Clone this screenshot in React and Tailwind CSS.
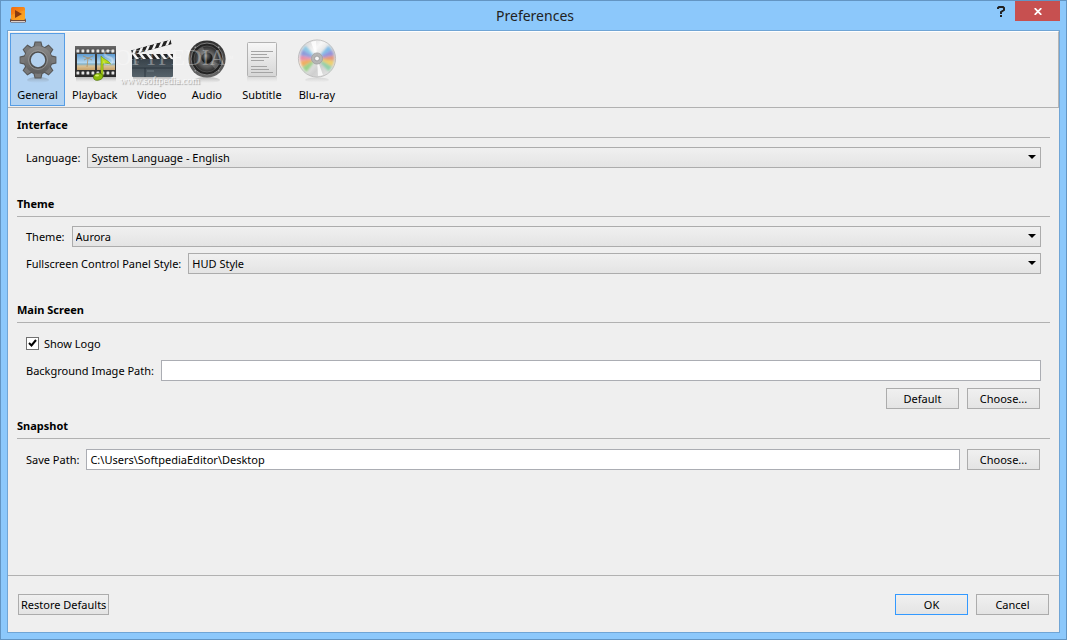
import { useState } from "react";

const wedges = [
  { from: 150, to: 172, color: "#f0a24a" },
  { from: 172, to: 190, color: "#e87f9a" },
  { from: 190, to: 212, color: "#7f8fd8" },
  { from: 212, to: 228, color: "#7cc3e6" },
  { from: 128, to: 150, color: "#8fcf7a" },
  { from: 312, to: 330, color: "#6fb6ea" },
  { from: 330, to: 350, color: "#8a86dc" },
  { from: 350, to: 368, color: "#ea8f6c" },
  { from: 8, to: 28, color: "#f2cf5c" },
  { from: 28, to: 48, color: "#86d0a0" }
];

const point = (angle, r) => {
  const rad = (angle * Math.PI) / 180;
  return `${22 + r * Math.cos(rad)},${20.5 + r * Math.sin(rad)}`;
};

function GearIcon() {
  return (
    <svg width="44" height="48" viewBox="0 0 44 48" aria-hidden="true">
      <defs>
        <linearGradient id="gear" x1="0" y1="0" x2="0" y2="1">
          <stop offset="0" stopColor="#8b8b8b" />
          <stop offset="1" stopColor="#5d5d5d" />
        </linearGradient>
        <linearGradient id="fade" x1="0" y1="0" x2="0" y2="1">
          <stop offset="0" stopColor="#555" stopOpacity="0.35" />
          <stop offset="1" stopColor="#777" stopOpacity="0" />
        </linearGradient>
      </defs>
      <ellipse cx="22" cy="42" rx="11" ry="3" fill="url(#fade)" />
      <g fill="#555">
        {[0, 45, 90, 135, 180, 225, 270, 315].map(a => (
          <path key={a} d="M17 10 L18.6 3.6 H25.4 L27 10Z" transform={`rotate(${a} 22 22)`} />
        ))}
        <circle cx="22" cy="22" r="14.5" />
      </g>
      <g fill="url(#gear)">
        {[0, 45, 90, 135, 180, 225, 270, 315].map(a => (
          <path key={a} d="M18 11 L19.4 4.4 H24.6 L26 11Z" fill="#787878" transform={`rotate(${a} 22 22)`} />
        ))}
        <circle cx="22" cy="22" r="13.7" />
      </g>
      <circle cx="22" cy="22" r="8" fill="#b3d1ef" stroke="#505050" strokeWidth="1.6" />
      <circle cx="22" cy="22" r="9.4" fill="none" stroke="#a0a0a0" strokeWidth="0.7" />
    </svg>
  );
}

function FilmIcon() {
  return (
    <svg width="44" height="48" viewBox="0 0 44 48" aria-hidden="true">
      <defs>
        <linearGradient id="film" x1="0" y1="0" x2="0" y2="1">
          <stop offset="0" stopColor="#6a6a6a" />
          <stop offset="0.3" stopColor="#383838" />
          <stop offset="1" stopColor="#2a2a2a" />
        </linearGradient>
        <linearGradient id="sky" x1="0" y1="0" x2="0" y2="1">
          <stop offset="0" stopColor="#5c9ad0" />
          <stop offset="0.55" stopColor="#b5d8f0" />
          <stop offset="0.62" stopColor="#7fb0c8" />
          <stop offset="0.75" stopColor="#d9c296" />
          <stop offset="1" stopColor="#c8a26a" />
        </linearGradient>
      </defs>
      <rect x="3" y="39" width="40" height="5" fill="url(#fade)" />
      <rect x="2" y="8" width="41" height="31" fill="url(#film)" />
      {[3, 8, 13, 18, 23, 28, 33, 38].map(x => (
        <g key={x} fill="#e4e4e4">
          <rect x={x + 0.5} y="11.5" width="2.8" height="3" rx="0.5" />
          <rect x={x + 0.5} y="33.5" width="2.8" height="3" rx="0.5" />
        </g>
      ))}
      <rect x="4" y="16" width="18" height="16" fill="url(#sky)" />
      <rect x="24" y="16" width="18" height="16" fill="url(#sky)" />
      <path d="M14 29 L15 20 M15 20 L10 18 M15 20 L20 18 M15 20 L11 22 M15 20 L19 22" stroke="#b08a58" strokeWidth="0.9" fill="none" opacity="0.8" />
      <path d="M28 38.5 V18 C30 21 35 22 38 26 C34 25 32 25 30 26 V38.5Z" fill="#b8dc1c" stroke="#74970e" strokeWidth="0.7" />
      <ellipse cx="25.2" cy="38.8" rx="4.7" ry="3.4" fill="#8cbc0a" stroke="#527708" strokeWidth="0.7" transform="rotate(-15 25 39)" />
      <ellipse cx="24" cy="37.6" rx="2" ry="1" fill="#daf06c" />
    </svg>
  );
}

function ClapperIcon() {
  return (
    <svg width="44" height="48" viewBox="0 0 44 48" aria-hidden="true">
      <defs>
        <linearGradient id="slate" x1="0" y1="0" x2="0" y2="1">
          <stop offset="0" stopColor="#38424a" />
          <stop offset="1" stopColor="#56626a" />
        </linearGradient>
        <clipPath id="bar">
          <rect x="2" y="16" width="41" height="5" />
        </clipPath>
      </defs>
      <rect x="3" y="39" width="39" height="5" fill="url(#fade)" />
      <g clipPath="url(#bar)" transform="rotate(-15 2 16) translate(0 -4)">
        <rect x="2" y="16" width="41" height="5" fill="#222" />
        {[1, 8, 15, 22, 29, 36].map(x => (
          <path key={x} d={`M${x} 21 L${x + 4} 16 H${x + 7} L${x + 3} 21Z`} fill="#f3f3f3" />
        ))}
      </g>
      <g clipPath="url(#bar)">
        <rect x="2" y="16" width="41" height="5" fill="#222" />
        {[2, 9, 16, 23, 30, 37].map(x => (
          <path key={x} d={`M${x} 16 H${x + 3} L${x + 7} 21 H${x + 4}Z`} fill="#f3f3f3" />
        ))}
      </g>
      <rect x="2" y="21" width="41" height="18" rx="1" fill="url(#slate)" />
      <path d="M2 30 H43 M15 30 V39" stroke="#27303a" strokeWidth="0.8" />
      <path d="M5 24 H9 M5 26 H8 M17 33 H24" stroke="#82909a" strokeWidth="0.7" />
    </svg>
  );
}

function SpeakerIcon() {
  return (
    <svg width="44" height="48" viewBox="0 0 44 48" aria-hidden="true">
      <defs>
        <linearGradient id="rim" x1="0" y1="0" x2="0" y2="1">
          <stop offset="0" stopColor="#303030" />
          <stop offset="1" stopColor="#686868" />
        </linearGradient>
        <radialGradient id="cone">
          <stop offset="0" stopColor="#333" />
          <stop offset="0.55" stopColor="#666" />
          <stop offset="1" stopColor="#292929" />
        </radialGradient>
        <radialGradient id="cap" cx="0.4" cy="0.3">
          <stop offset="0" stopColor="#777" />
          <stop offset="1" stopColor="#1b1b1b" />
        </radialGradient>
      </defs>
      <ellipse cx="22" cy="42" rx="13" ry="3" fill="url(#fade)" />
      <circle cx="22" cy="21" r="18.6" fill="url(#rim)" />
      <circle cx="22" cy="21" r="16" fill="#222" stroke="#7c7c7c" strokeWidth="1" />
      <circle cx="22" cy="21" r="13" fill="url(#cone)" stroke="#555" strokeWidth="0.8" />
      <path d="M22 21 L12 13 A13 13 0 0 1 18 9Z M22 21 L34 26 A13 13 0 0 1 30 31Z" fill="#aaa" opacity="0.35" />
      <circle cx="22" cy="20" r="5.5" fill="url(#cap)" />
      {[45, 135, 225, 315].map(a => (
        <circle key={a} cx="22" cy="4.4" r="0.8" fill="#aaa" transform={`rotate(${a} 22 21)`} />
      ))}
    </svg>
  );
}

function PageIcon() {
  return (
    <svg width="44" height="48" viewBox="0 0 44 48" aria-hidden="true">
      <defs>
        <linearGradient id="page" x1="0" y1="0" x2="0" y2="1">
          <stop offset="0" stopColor="#f7f7f7" />
          <stop offset="1" stopColor="#d6d6d6" />
        </linearGradient>
      </defs>
      <rect x="7" y="39" width="30" height="5" fill="url(#fade)" opacity="0.4" />
      <rect x="7.5" y="4.5" width="29" height="34" rx="1" fill="url(#page)" stroke="#b2b2b2" />
      <path d="M11 13.5 H33 M11 16.5 H27 M11 19.5 H29 M11 22.5 H24 M11 28.5 H27 M11 31.5 H29 M11 34.5 H33" stroke="#a4a4a4" />
    </svg>
  );
}

function DiscIcon() {
  return (
    <svg width="44" height="48" viewBox="0 0 44 48" aria-hidden="true">
      <defs>
        <linearGradient id="disc" x1="0" y1="0" x2="1" y2="1">
          <stop offset="0" stopColor="#c4c4c4" />
          <stop offset="0.35" stopColor="#f7f7f7" />
          <stop offset="0.65" stopColor="#cfcfcf" />
          <stop offset="1" stopColor="#eee" />
        </linearGradient>
        <filter id="soft">
          <feGaussianBlur stdDeviation="0.8" />
        </filter>
      </defs>
      <ellipse cx="22" cy="42" rx="12" ry="2.5" fill="url(#fade)" opacity="0.5" />
      <circle cx="22" cy="20.5" r="18.6" fill="url(#disc)" stroke="#b8b8b8" strokeWidth="0.8" />
      <g filter="url(#soft)" opacity="0.85">
        {wedges.map(w => (
          <path key={w.from} d={`M${point(w.from, 5)} L${point(w.from, 17)} A17 17 0 0 1 ${point(w.to, 17)} L${point(w.to, 5)}Z`} fill={w.color} />
        ))}
      </g>
      <path d="M22 20.5 L16 4 A17.5 17.5 0 0 1 21 3Z M22 20.5 L28 37 A17.5 17.5 0 0 1 23 38Z" fill="#fff" opacity="0.8" />
      <circle cx="22" cy="20.5" r="5.6" fill="#b5b5b5" stroke="#999" strokeWidth="0.7" />
      <circle cx="22" cy="20.5" r="2.4" fill="#f5f5f5" stroke="#8d8d8d" strokeWidth="0.7" />
    </svg>
  );
}

function AppIcon() {
  return (
    <svg width="16" height="17" viewBox="0 0 16 17" aria-hidden="true">
      <defs>
        <linearGradient id="app" x1="0" y1="0" x2="1" y2="1">
          <stop offset="0" stopColor="#f26a10" />
          <stop offset="1" stopColor="#fba51e" />
        </linearGradient>
      </defs>
      <path d="M1 11 L0 13 V14 Q0 15.5 1.5 15.5 H14.5 Q16 15.5 16 14 V13 L15 11Z" fill="#6b4b40" />
      <path d="M1 14.5 H15" stroke="#ddd0ca" />
      <rect x="1" y="0" width="14" height="13" rx="1.5" fill="url(#app)" />
      <path d="M1 8 L15 3 V11.5 Q15 13 13 13 H3 Q1 13 1 11.5Z" fill="#ffb52e" opacity="0.35" />
      <path d="M5 3 L12 7 L5 11Z" fill="#8a3a10" />
    </svg>
  );
}

const tabs = [
  { name: "General", Icon: GearIcon },
  { name: "Playback", Icon: FilmIcon },
  { name: "Video", Icon: ClapperIcon },
  { name: "Audio", Icon: SpeakerIcon },
  { name: "Subtitle", Icon: PageIcon },
  { name: "Blu-ray", Icon: DiscIcon }
];

const Section = ({ title, children }) => (
  <section>
    <h2 className="h-[22px] border-b border-[#b1b1b1] leading-[18px] font-bold">{title}</h2>
    <div className="flex flex-col gap-1.5 pt-[9px] px-[9px]">{children}</div>
  </section>
);

const SelectRow = ({ id, label, options }) => (
  <div className="flex items-center gap-[7px]">
    <label htmlFor={id}>{label}</label>
    <div className="relative flex-1">
      <select
        id={id}
        className="block w-full h-[21px] appearance-none border border-[#acacac] bg-linear-to-b from-[#f0f0f0] to-[#e4e4e4] pl-[3px] pr-5 leading-[19px] outline-none"
      >
        {options.map(option => (
          <option key={option}>{option}</option>
        ))}
      </select>
      <svg className="absolute right-[5px] top-2 pointer-events-none" width="8" height="4" viewBox="0 0 8 4" aria-hidden="true">
        <path d="M0 0 H8 L4 4Z" fill="#000" />
      </svg>
    </div>
  </div>
);

const PathInput = ({ id, label, value, onChange }) => (
  <>
    <label htmlFor={id}>{label}</label>
    <input
      id={id}
      type="text"
      value={value}
      onChange={e => onChange(e.target.value)}
      className="flex-1 min-w-0 h-[21px] border border-[#abadb3] bg-white px-[3px] outline-none"
    />
  </>
);

const Button = ({ primary, fit, children, onClick }) => (
  <button
    type="button"
    onClick={onClick}
    className={`h-[21px] shrink-0 border bg-linear-to-b from-[#f0f0f0] to-[#e4e4e4] text-center leading-[19px] ${
      primary ? "border-[#3399ff]" : "border-[#acacac]"
    } ${fit ? "px-0.5" : "w-[73px]"}`}
  >
    {children}
  </button>
);

function App() {
  const [active, setActive] = useState("General");
  const [showLogo, setShowLogo] = useState(true);
  const [background, setBackground] = useState("");
  const [savePath, setSavePath] = useState("C:\\Users\\SoftpediaEditor\\Desktop");

  return (
    <div className="min-h-screen flex flex-col border border-[#6395c3] bg-[#8cc8fb] px-1.5 pb-1.5 font-['Noto_Sans','Open_Sans',sans-serif] text-[11px] leading-[19px] text-black">
      {/* Title bar */}
      <header className="flex h-[29px] items-start">
        <div className="flex-1 pl-[3px] pt-1.5">
          <AppIcon />
        </div>
        <h1 className="text-[14px] leading-[30px] text-[#222]">Preferences</h1>
        <div className="flex flex-1 justify-end">
          <button type="button" aria-label="Help" className="flex w-7 h-5 items-center justify-center">
            <svg width="8" height="11" viewBox="0 0 8 11" aria-hidden="true">
              <path d="M1 3 V2 L2 1 H6 L7 2 V4 L4 6 V8 M4 9 V11" fill="none" stroke="#222" strokeWidth="2" />
            </svg>
          </button>
          <button type="button" aria-label="Close" className="flex w-[45px] h-5 items-center justify-center bg-[#c75050]">
            <svg width="8" height="7" viewBox="0 0 8 7" aria-hidden="true">
              <path d="M0.7 0.2 L7.3 6.8 M7.3 0.2 L0.7 6.8" stroke="#fff" strokeWidth="1.8" />
            </svg>
          </button>
        </div>
      </header>

      <div className="flex flex-1 flex-col border border-[#70a5d5] bg-[#efefef]">
        {/* Toolbar */}
        <nav className="relative flex border-t border-r border-b border-t-white border-r-[#b5b5b5] border-b-[#b1b1b1] pl-0.5 pt-px pb-px">
          {tabs.map(({ name, Icon }) => (
            <button
              key={name}
              type="button"
              onClick={() => setActive(name)}
              className={`flex h-[73px] min-w-[55px] flex-col items-center border pt-1 leading-[18px] ${
                active === name ? "border-[#569de5] bg-[#b3d3f2]" : "border-transparent"
              }`}
            >
              <Icon />
              <span className="px-1.5">{name}</span>
            </button>
          ))}
          <div className="absolute left-[94px] top-3.5 pointer-events-none font-['Liberation_Serif',serif] text-[23px] leading-6 text-white/35">
            SOFTPEDIA<sup className="text-[8px]">™</sup>
          </div>
          <div className="absolute left-28 top-[43px] pointer-events-none font-['Liberation_Serif',serif] text-[10px] leading-3 text-white/80 text-shadow-[1px_1px_1px_#999]">
            www.softpedia.com
          </div>
        </nav>

        <main className="flex flex-1 flex-col px-[9px] pt-2">
          <div className="flex flex-col gap-[27px]">
            <Section title="Interface">
              <SelectRow id="language" label="Language:" options={["System Language - English"]} />
            </Section>
            <Section title="Theme">
              <SelectRow id="theme" label="Theme:" options={["Aurora"]} />
              <SelectRow id="panel" label="Fullscreen Control Panel Style:" options={["HUD Style"]} />
            </Section>
            <Section title="Main Screen">
              <label className="relative flex h-[22px] items-center gap-[5px]">
                <input
                  type="checkbox"
                  checked={showLogo}
                  onChange={e => setShowLogo(e.target.checked)}
                  className="peer size-[13px] appearance-none border border-[#707070] bg-white"
                />
                <svg className="absolute left-0.5 top-[7px] hidden pointer-events-none peer-checked:block" width="9" height="8" viewBox="0 0 9 8" aria-hidden="true">
                  <path d="M1 4 L3.5 6.5 L8 1" fill="none" stroke="#000" strokeWidth="2" />
                </svg>
                Show Logo
              </label>
              <div className="flex items-center gap-[7px]">
                <PathInput id="background" label="Background Image Path:" value={background} onChange={setBackground} />
              </div>
              <div className="flex justify-end gap-2 pt-px pr-px">
                <Button onClick={() => setBackground("")}>Default</Button>
                <Button>Choose...</Button>
              </div>
            </Section>
          </div>
          <div className="mt-2">
            <Section title="Snapshot">
              <div className="flex items-center gap-[7px] pt-px pr-px">
                <PathInput id="save" label="Save Path:" value={savePath} onChange={setSavePath} />
                <Button>Choose...</Button>
              </div>
            </Section>
          </div>
        </main>

        {/* Dialog actions */}
        <footer className="flex gap-2 border-t border-[#b1b1b1] px-2.5 pt-[18px] pb-[17px]">
          <Button fit>Restore Defaults</Button>
          <div className="flex flex-1 justify-end gap-2">
            <Button primary>OK</Button>
            <Button>Cancel</Button>
          </div>
        </footer>
      </div>
    </div>
  );
}

export default App;
